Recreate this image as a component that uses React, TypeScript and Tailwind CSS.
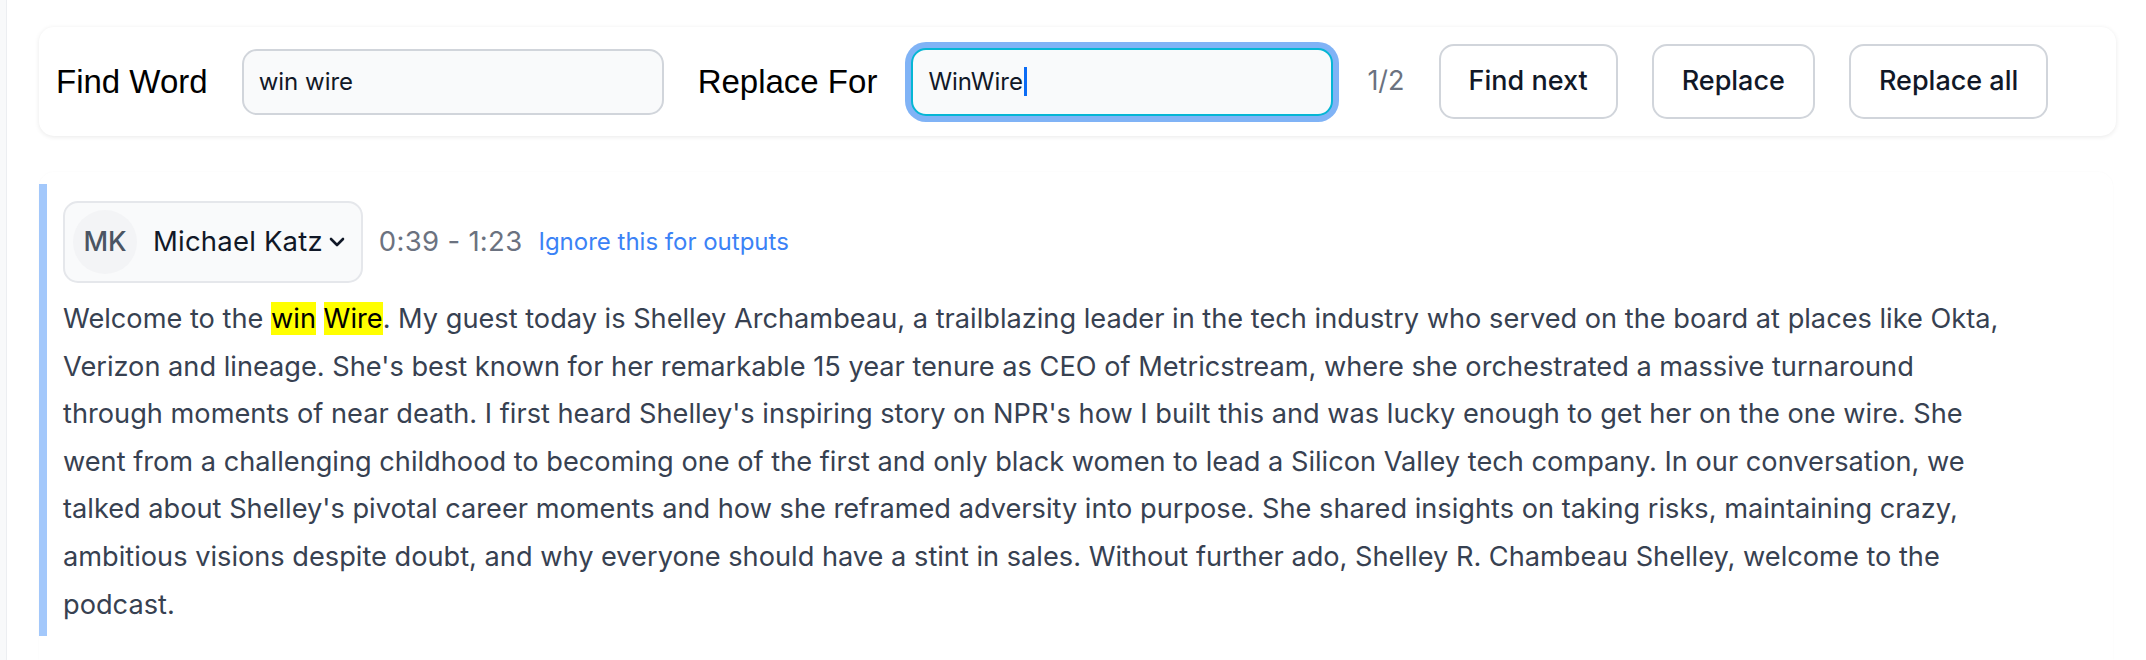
import { ChevronDown } from 'lucide-react';

function Button({ label }: { label: string }) {
  return (
    <button className="h-[75px] shrink-0 rounded-[15px] border-2 border-[#d1d5db] bg-white px-[28px] text-[27px] font-medium text-[#111827]">
      {label}
    </button>
  );
}

export default function App() {
  return (
    <div className="flex h-[660px] w-full overflow-hidden bg-white font-['Inter',sans-serif]">
      {/* left edge of the parent pane */}
      <div className="w-[7px] shrink-0 border-r border-[#eceef1] bg-[#f8f9fa]" />

      <div className="flex min-w-0 flex-1 flex-col gap-[36px] pl-[32px] pr-[30px] pt-[27px]">
        {/* Find / replace bar */}
        <div className="flex items-center gap-[34px] rounded-[15px] bg-white p-[17px] shadow-[0_1px_5px_rgba(0,0,0,0.09)]">
          <label className="shrink-0 font-['Liberation_Sans',Arial,sans-serif] text-[33px] leading-none text-black">
            Find Word
          </label>
          <div className="flex h-[66px] w-[422px] shrink-0 items-center rounded-[15px] border-2 border-[#d1d5db] bg-[#f9fafb] px-[15px] text-[24px] text-[#111827]">
            win wire
          </div>
          <label className="shrink-0 font-['Liberation_Sans',Arial,sans-serif] text-[33px] leading-none text-black">
            Replace For
          </label>
          <div className="flex h-[68px] w-[422px] shrink-0 items-center rounded-[15px] border-2 border-[#06b6d4] bg-[#f9fafb] px-[15px] text-[24px] text-[#111827] ring-[6px] ring-[#80b3f6]">
            WinWire
            <span className="ml-px h-[29px] w-[3px] bg-[#0b6cf5]" />
          </div>
          <span className="shrink-0 text-[27px] text-[#6b7280]">1/2</span>
          <Button label="Find next" />
          <Button label="Replace" />
          <Button label="Replace all" />
        </div>

        {/* Transcript */}
        <div className="mr-[3px] flex-1 rounded-t-[15px] bg-white pt-[12px] shadow-[0_0_2px_rgba(0,0,0,0.03)]">
          <div className="border-l-[8px] border-[#a3c8fb] pb-[8px] pl-[16px] pr-[10px] pt-[17px]">
            <div className="flex items-center gap-[16px]">
              <div className="flex items-center gap-[16px] rounded-[15px] border-2 border-[#e5e7eb] bg-[#f9fafb] py-[7px] pl-[8px] pr-[12px]">
                <div className="flex h-[64px] w-[64px] items-center justify-center rounded-full bg-[#f3f4f6] text-[27px] font-medium text-[#4b5563]">
                  MK
                </div>
                <div className="flex items-center gap-[2px]">
                  <span className="text-[27.5px] tracking-[0.2px] text-[#111827]">Michael Katz</span>
                  <ChevronDown size={24} strokeWidth={2.6} className="text-[#111827]" />
                </div>
              </div>
              <span className="text-[27.5px] tracking-[0.3px] text-[#6b7280]">0:39 - 1:23</span>
              <span className="text-[24px] text-[#3b82f6]">Ignore this for outputs</span>
            </div>
            <p className="mt-[12px] whitespace-nowrap text-[27.2px] leading-[47.6px] text-[#374151]">
              Welcome to the <span className="bg-[#ffff00] text-black">win</span>{' '}
              <span className="bg-[#ffff00] text-black">Wire</span>. My guest today is Shelley Archambeau, a
              trailblazing leader in the tech industry who served on the board at places like Okta,
              <br />
              Verizon and lineage. She's best known for her remarkable 15 year tenure as CEO of Metricstream, where
              she orchestrated a massive turnaround
              <br />
              through moments of near death. I first heard Shelley's inspiring story on NPR's how I built this and
              was lucky enough to get her on the one wire. She
              <br />
              went from a challenging childhood to becoming one of the first and only black women to lead a Silicon
              Valley tech company. In our conversation, we
              <br />
              talked about Shelley's pivotal career moments and how she reframed adversity into purpose. She shared
              insights on taking risks, maintaining crazy,
              <br />
              ambitious visions despite doubt, and why everyone should have a stint in sales. Without further ado,
              Shelley R. Chambeau Shelley, welcome to the
              <br />
              podcast.
            </p>
          </div>
        </div>
      </div>
    </div>
  );
}
